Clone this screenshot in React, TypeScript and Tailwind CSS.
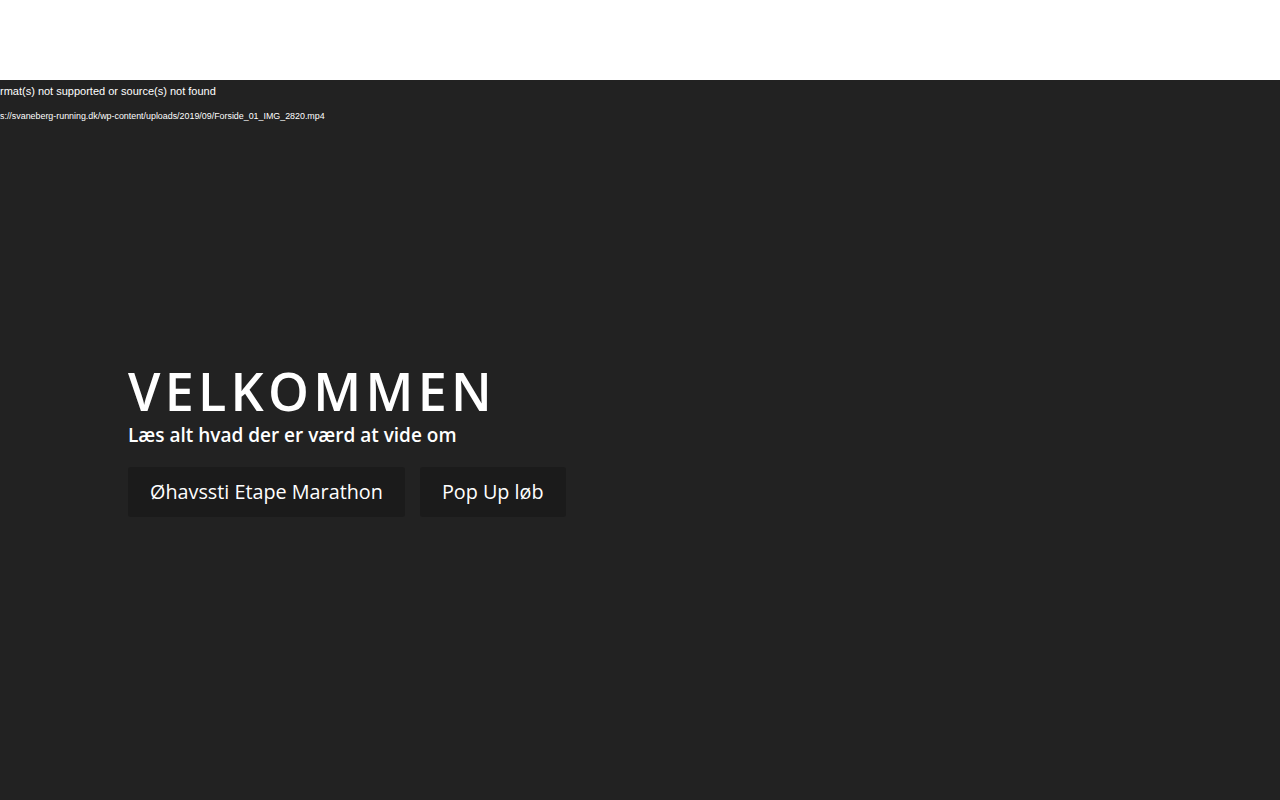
export default function App() {
  return (
    <div className="min-h-[800px] flex flex-col bg-[#222222]">
      {/* Header */}
      <header className="h-20 bg-white"></header>

      {/* Video hero */}
      <section className="flex-1 bg-[#222222] flex flex-col">
        <div className="pt-[4px] text-white font-['Liberation_Sans',Arial,sans-serif]">
          <p className="text-[11px] leading-[14px]">rmat(s) not supported or source(s) not found</p>
          <p className="mt-[13px] text-[8.9px] leading-[11px]">s://svaneberg-running.dk/wp-content/uploads/2019/09/Forside_01_IMG_2820.mp4</p>
        </div>

        <div className="pl-32 pt-[243px] font-['Open_Sans',sans-serif] text-white">
          <h1 className="text-[52px] leading-[52px] font-semibold tracking-[4.3px] mb-[4px]">VELKOMMEN</h1>
          <p className="text-[19px] leading-[28px] font-semibold">Læs alt hvad der er værd at vide om</p>
          <div className="mt-[18px] flex gap-[15px]">
            <a className="h-[50px] px-[22px] flex items-center rounded-[3px] bg-[#1b1b1b] text-[19.8px]">Øhavssti Etape Marathon</a>
            <a className="h-[50px] px-[22px] flex items-center rounded-[3px] bg-[#1b1b1b] text-[19.8px]">Pop Up løb</a>
          </div>
        </div>
      </section>
    </div>
  );
}
